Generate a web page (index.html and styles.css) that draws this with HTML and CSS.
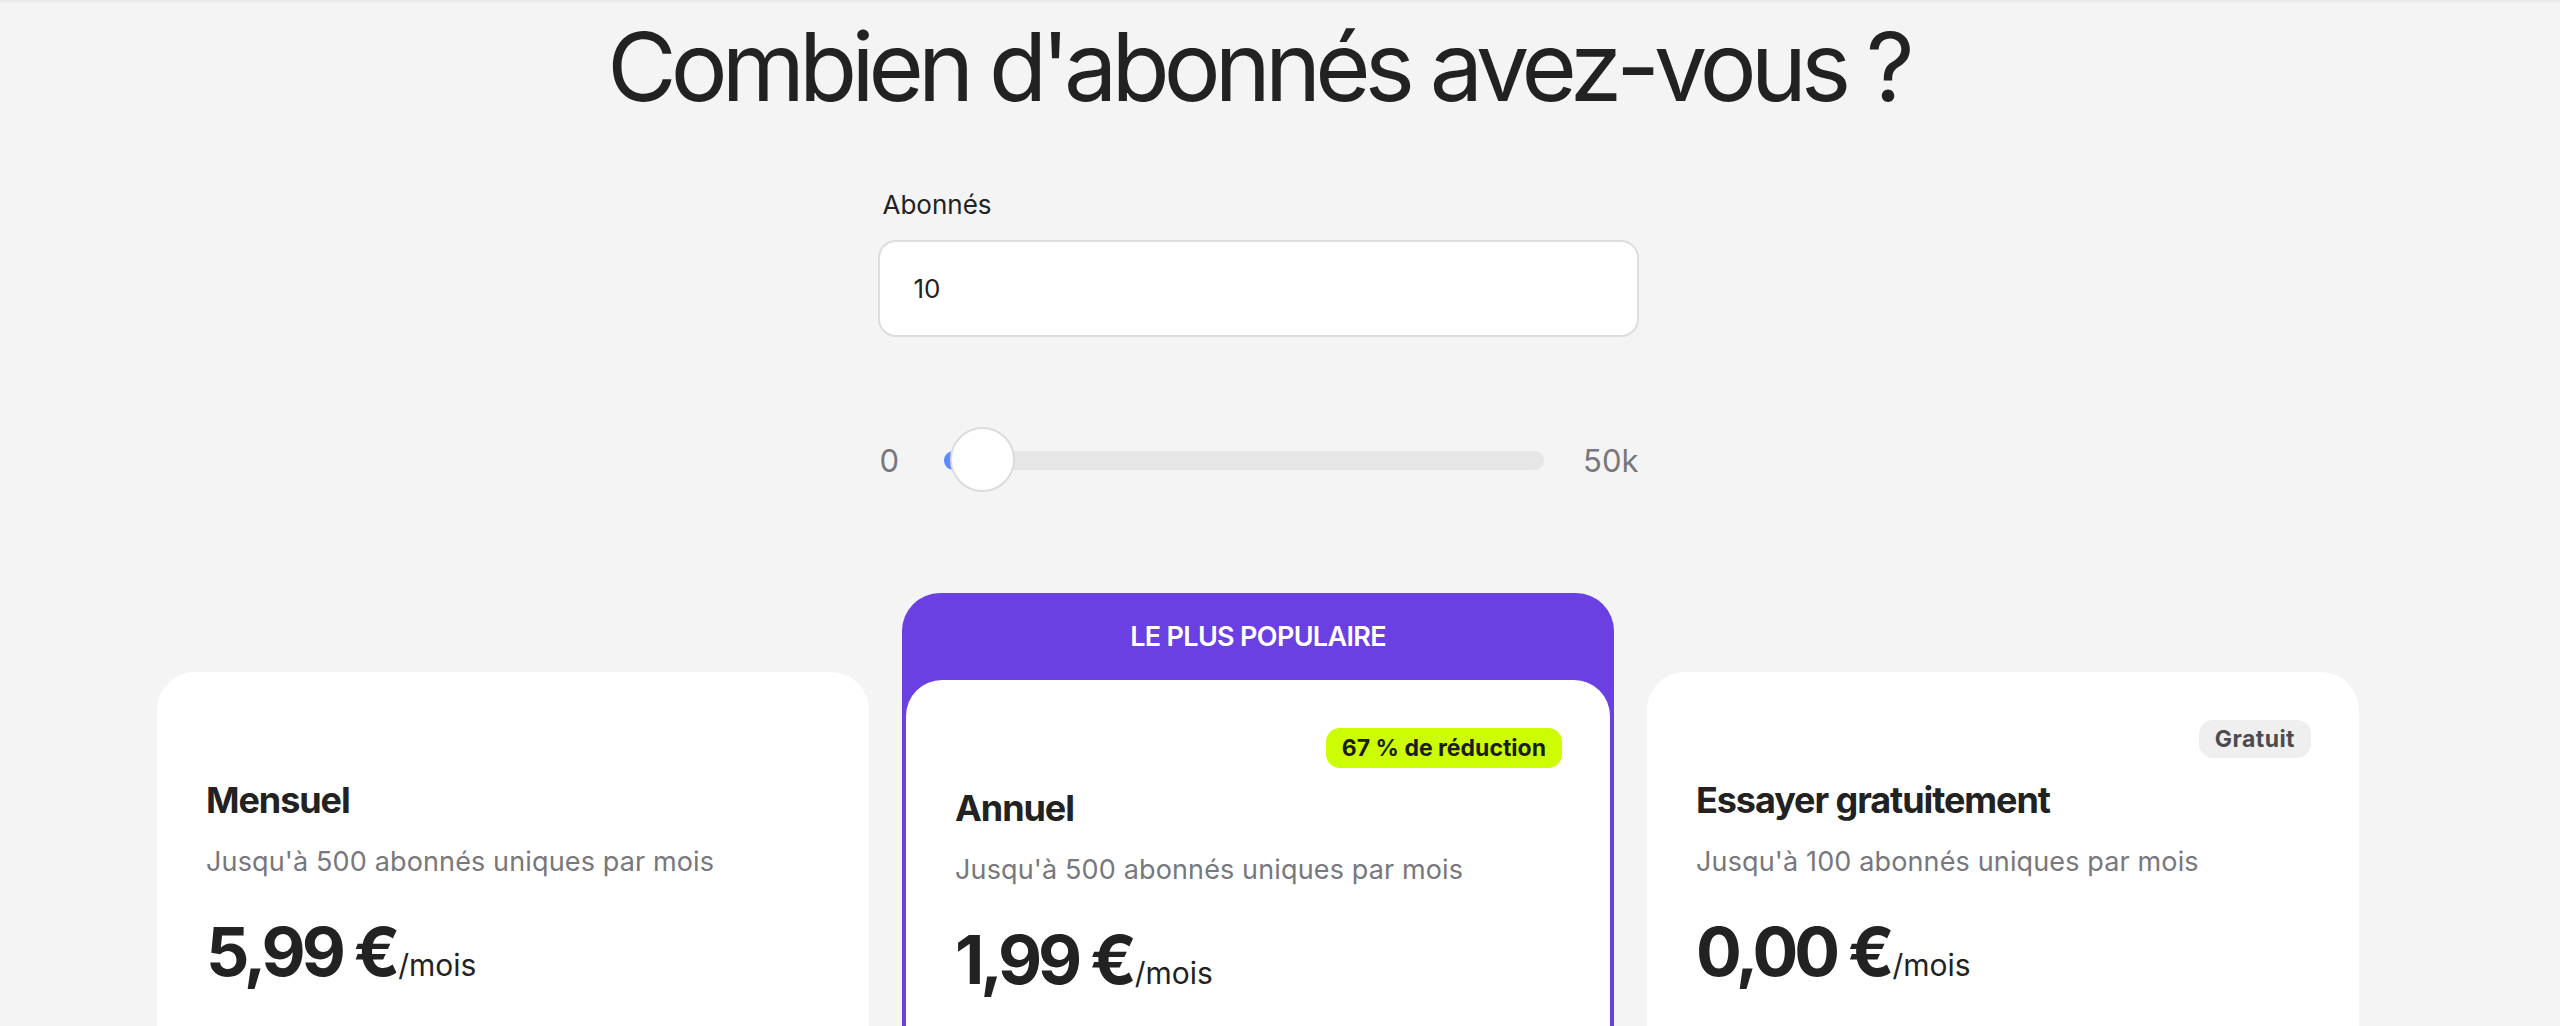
FILE: index.html
```html
<!DOCTYPE html>
<html lang="fr">
<head>
    <meta charset="UTF-8">
    <meta name="viewport" content="width=device-width, initial-scale=1.0">
    <title>Tarifs</title>
    <link rel="stylesheet" href="styles.css">
</head>
<body>

<div class="topline"></div>

<main class="pricing">
    <h1 class="pricing-title">Combien d'abonnés avez-vous ?</h1>

    <div class="subscribers">
        <label class="field-label" for="subsInput">Abonnés</label>
        <input class="field-input" id="subsInput" type="text" value="10">

        <div class="range">
            <span class="range-min">0</span>
            <div class="range-track">
                <div class="range-fill"></div>
                <div class="range-thumb"></div>
            </div>
            <span class="range-max">50k</span>
        </div>
    </div>

    <div class="plans">
        <div class="plan">
            <div class="plan-inner">
                <div class="plan-tags"></div>
                <h2 class="plan-name">Mensuel</h2>
                <p class="plan-desc">Jusqu'à 500 abonnés uniques par mois</p>
                <p class="plan-price">5,99 €<span class="per">/mois</span></p>
            </div>
        </div>

        <div class="plan plan-popular">
            <div class="popular-head">LE PLUS POPULAIRE</div>
            <div class="plan-inner">
                <div class="plan-tags">
                    <span class="tag tag-lime">67 % de réduction</span>
                </div>
                <h2 class="plan-name">Annuel</h2>
                <p class="plan-desc">Jusqu'à 500 abonnés uniques par mois</p>
                <p class="plan-price">1,99 €<span class="per">/mois</span></p>
            </div>
        </div>

        <div class="plan">
            <div class="plan-inner">
                <div class="plan-tags">
                    <span class="tag tag-grey">Gratuit</span>
                </div>
                <h2 class="plan-name">Essayer gratuitement</h2>
                <p class="plan-desc">Jusqu'à 100 abonnés uniques par mois</p>
                <p class="plan-price">0,00 €<span class="per">/mois</span></p>
            </div>
        </div>
    </div>
</main>

</body>
</html>
```

FILE: styles.css
```css
* {
    box-sizing: border-box;
}

body {
    margin: 0;
    padding: 0;
    background: #f4f4f4;
    color: #222;
    font-family: Inter, 'Noto Sans', sans-serif;
    overflow: hidden;
}

.topline {
    height: 4px;
    background: linear-gradient(180deg, #e8e8e8, #f4f4f4);
}

.pricing {
    padding-right: 44px;
    display: flex;
    flex-direction: column;
    align-items: center;
}

.pricing-title {
    margin: 6px 0 0;
    font-size: 95px;
    font-weight: 400;
    line-height: 1.2;
    letter-spacing: -0.062em;
    color: #222;
}

/* subscribers input + slider */
.subscribers {
    width: 761px;
    margin-top: 63px;
    display: flex;
    flex-direction: column;
}

.field-label {
    font-size: 26px;
    line-height: 36px;
    padding-left: 5px;
    color: #222;
}

.field-input {
    margin-top: 17px;
    height: 97px;
    padding: 0 34px;
    border: 2px solid #dddddd;
    border-radius: 18px;
    background: #fff;
    font-family: inherit;
    font-size: 26px;
    color: #222;
    outline: none;
}

.range {
    margin-top: 90px;
    height: 66px;
    display: flex;
    align-items: center;
}

.range-min, .range-max {
    font-size: 31px;
    color: #77777d;
}

.range-min {
    width: 66px;
    padding-left: 2px;
}

.range-max {
    width: 95px;
    text-align: right;
}

.range-track {
    flex: 1;
    height: 19px;
    border-radius: 10px;
    background: #e6e6e6;
    position: relative;
}

.range-fill {
    width: 40px;
    height: 100%;
    border-radius: 10px 0 0 10px;
    background: linear-gradient(90deg, #4f8dff, #e26cff);
}

.range-thumb {
    position: absolute;
    left: 6px;
    top: 50%;
    width: 65px;
    height: 65px;
    margin-top: -33px;
    border: 2px solid #dcdcdc;
    border-radius: 50%;
    background: #fff;
}

/* plan cards */
.plans {
    width: 2202px;
    margin-top: 100px;
    display: grid;
    grid-template-columns: repeat(3, 1fr);
    align-items: start;
    gap: 33px;
}

.plan {
    margin-top: 79px;
    background: #fff;
    border-radius: 38px;
    min-height: 600px;
}

.plan-popular {
    margin-top: 0;
    background: #6a40e2;
    padding: 0 4px 4px;
}

.popular-head {
    height: 87px;
    display: flex;
    align-items: center;
    justify-content: center;
    color: #fff;
    font-size: 27px;
    font-weight: 600;
    letter-spacing: -0.025em;
}

.plan-popular .plan-inner {
    background: #fff;
    border-radius: 36px;
    min-height: 600px;
}

.plan-inner {
    padding: 48px 48px 48px 49px;
}

.plan-tags {
    height: 40px;
    display: flex;
    justify-content: flex-end;
}

.tag {
    padding: 0 16px;
    border-radius: 14px;
    font-size: 23px;
    font-weight: 700;
}

.tag-lime {
    background: #cdfd03;
    color: #1c1c1c;
    height: 40px;
    line-height: 40px;
}

.tag-grey {
    background: #efefef;
    color: #4b4b50;
    height: 38px;
    line-height: 38px;
    letter-spacing: 0.02em;
}

.plan-name {
    margin: 17px 0 0;
    font-size: 36px;
    font-weight: 700;
    line-height: 47px;
    letter-spacing: -0.03em;
    color: #222;
}

.plan-desc {
    margin: 20px 0 0;
    font-size: 27px;
    line-height: 36px;
    color: #77777d;
    letter-spacing: 0.005em;
}

.plan-price {
    margin: 33px 0 0;
    font-size: 68px;
    font-weight: 700;
    line-height: 77px;
    letter-spacing: -0.06em;
    color: #222;
}

.plan-price .per {
    font-size: 30px;
    font-weight: 400;
    letter-spacing: 0;
    margin-left: 2px;
}
```
